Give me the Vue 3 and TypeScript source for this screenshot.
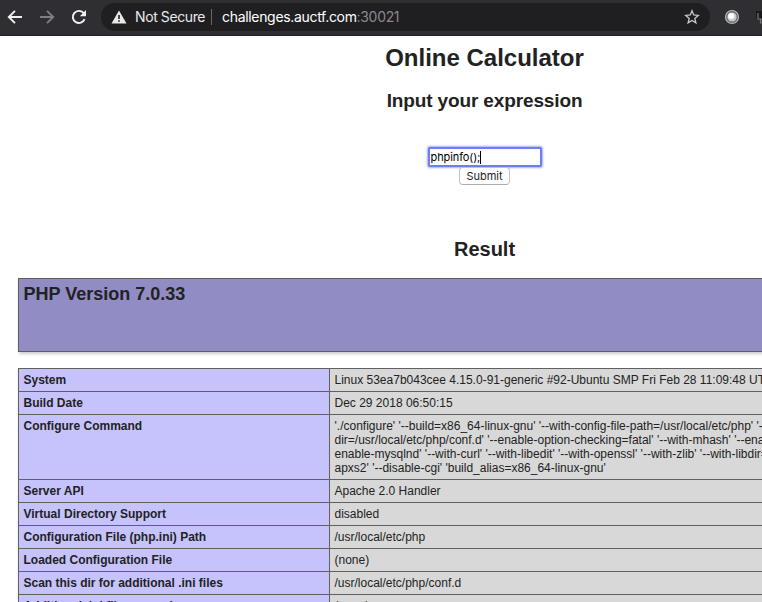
<script setup lang="ts">
interface InfoRow {
  name: string
  lines: string[]
}

const rows: InfoRow[] = [
  { name: 'System', lines: ['Linux 53ea7b043cee 4.15.0-91-generic #92-Ubuntu SMP Fri Feb 28 11:09:48 UTC'] },
  { name: 'Build Date', lines: ['Dec 29 2018 06:50:15'] },
  {
    name: 'Configure Command',
    lines: [
      "'./configure' '--build=x86_64-linux-gnu' '--with-config-file-path=/usr/local/etc/php' '--",
      "dir=/usr/local/etc/php/conf.d' '--enable-option-checking=fatal' '--with-mhash' '--enab",
      "enable-mysqlnd' '--with-curl' '--with-libedit' '--with-openssl' '--with-zlib' '--with-libdir=",
      "apxs2' '--disable-cgi' 'build_alias=x86_64-linux-gnu'",
    ],
  },
  { name: 'Server API', lines: ['Apache 2.0 Handler'] },
  { name: 'Virtual Directory Support', lines: ['disabled'] },
  { name: 'Configuration File (php.ini) Path', lines: ['/usr/local/etc/php'] },
  { name: 'Loaded Configuration File', lines: ['(none)'] },
  { name: 'Scan this dir for additional .ini files', lines: ['/usr/local/etc/php/conf.d'] },
  { name: 'Additional .ini files parsed', lines: ['(none)'] },
]
</script>

<template>
  <div class="window">
    <header class="toolbar">
      <svg class="nav-icon" viewBox="0 0 16 16"><path d="M15 8H2M8 1.8 1.8 8 8 14.2" /></svg>
      <svg class="nav-icon forward" viewBox="0 0 16 16"><path d="M1 8h13M8 1.8 14.2 8 8 14.2" /></svg>
      <svg class="nav-icon reload" viewBox="0 0 16 16">
        <path d="M13.6 10.2A6.1 6.1 0 1 1 12.5 3.9L14 5.4" />
        <path class="solid" d="M15 1v6.2H8.8z" />
      </svg>
      <div class="omnibox">
        <svg class="warning" viewBox="0 0 16 14">
          <path fill="#e9e9ea" d="M8 .5 15.5 13.5H.5z" />
          <path fill="#1f1f22" d="M7.2 5h1.6v4H7.2zM7.2 10.2h1.6v1.6H7.2z" />
        </svg>
        <span class="security">Not Secure</span>
        <span class="divider"></span>
        <span class="url"><span class="host">challenges.auctf.com</span><span class="port">:30021</span></span>
        <svg class="star" viewBox="0 0 16 16">
          <path d="M8 1.8 9.7 6l4.6.4-3.5 3 1.1 4.4L8 11.4l-3.9 2.4 1.1-4.4-3.5-3L6.3 6z" />
        </svg>
      </div>
      <svg class="orb" viewBox="0 0 16 16">
        <circle cx="8" cy="8" r="6.5" fill="#66696b" stroke="#b4b7b8" stroke-width="1.2" />
        <circle cx="8" cy="8" r="4.6" fill="#c8cccd" />
        <circle cx="7.2" cy="7" r="3" fill="#fff" />
      </svg>
      <svg class="clipped" viewBox="0 0 12 16">
        <path fill="#19191b" d="M0 2h9v8H0z" />
        <path fill="none" stroke="#77787a" stroke-width="1.2" d="M2 4v6h8M4.5 10v4h7" />
      </svg>
    </header>

    <main class="page">
      <h1>Online Calculator</h1>
      <h2 class="prompt">Input your expression</h2>
      <form class="calc" @submit.prevent>
        <div class="field"><span class="typed">phpinfo();</span><span class="caret"></span></div>
        <button type="submit">Submit</button>
      </form>
      <h2 class="result">Result</h2>

      <section class="banner"><span>PHP Version 7.0.33</span></section>

      <section class="info">
        <div v-for="row in rows" :key="row.name" class="row">
          <div class="name"><span>{{ row.name }}</span></div>
          <div class="value">
            <div v-for="line in row.lines" :key="line">{{ line }}</div>
          </div>
        </div>
      </section>
    </main>
  </div>
</template>

<style>
body {
  margin: 0;
  overflow: hidden;
}
</style>

<style scoped>
.window {
  width: 762px;
  height: 602px;
  overflow: hidden;
  background: #fff;
  color: #222;
  font-family: "Liberation Sans", Arial, sans-serif;
}
.toolbar {
  box-sizing: border-box;
  display: flex;
  align-items: center;
  width: 762px;
  height: 36px;
  padding: 0 0 2px 7px;
  background: #2f2e33;
  border-bottom: 1px solid #222125;
  overflow: hidden;
}
.nav-icon {
  flex: none;
  width: 16px;
  height: 16px;
  margin-right: 16px;
  fill: none;
  stroke: #f1f1f2;
  stroke-width: 1.9;
}
.nav-icon.forward {
  stroke: #7f7e82;
}
.nav-icon.reload {
  margin-right: 14px;
}
.nav-icon .solid {
  fill: #f1f1f2;
  stroke: none;
}
.omnibox {
  box-sizing: border-box;
  flex: none;
  display: flex;
  align-items: center;
  width: 609px;
  height: 28px;
  padding: 0 10px;
  border-radius: 14px;
  background: #1f1f22;
  font-family: Inter, sans-serif;
  font-size: 14px;
  line-height: 20px;
  white-space: nowrap;
}
.warning {
  width: 16px;
  height: 14px;
}
.security {
  width: 76px;
  margin-left: 8px;
  color: #e9e9ea;
  letter-spacing: -0.4px;
}
.divider {
  width: 1px;
  height: 16px;
  background: #68686b;
}
.url {
  margin-left: 10px;
  letter-spacing: -0.32px;
}
.host {
  color: #fff;
}
.port {
  color: #89898c;
}
.star {
  width: 16px;
  height: 16px;
  margin-left: auto;
  fill: none;
  stroke: #c7c7c9;
  stroke-width: 1.3;
}
.orb {
  flex: none;
  width: 16px;
  height: 16px;
  margin-left: 14px;
}
.clipped {
  flex: none;
  width: 12px;
  height: 16px;
  margin-left: 16px;
}
.page {
  display: flex;
  flex-direction: column;
  width: 933px;
  padding-left: 18px;
}
h1,
h2 {
  margin: 0;
  text-align: center;
  font-weight: bold;
}
h1 {
  margin-top: 8px;
  font-size: 24px;
  line-height: 28px;
}
h2 {
  font-size: 20px;
  line-height: 24px;
}
.prompt {
  margin-top: 17px;
  font-size: 19px;
  letter-spacing: -0.13px;
}
.calc {
  display: flex;
  flex-direction: column;
  align-items: center;
  margin-top: 34px;
}
.field {
  box-sizing: border-box;
  display: flex;
  align-items: center;
  width: 114px;
  height: 20px;
  padding: 1px 0 0 1px;
  border: 2px solid #6c7ef0;
  border-radius: 2px;
  box-shadow: 0 0 2px 1px #a3aff7;
  background: #fff;
  color: #000;
  font-family: Inter, sans-serif;
  font-size: 11px;
  line-height: 15px;
  letter-spacing: -0.1px;
}
.caret {
  width: 1px;
  height: 13px;
  background: #000;
}
button {
  position: relative;
  box-sizing: border-box;
  width: 51px;
  height: 18px;
  padding: 0;
  border: 1px solid #c3c3c3;
  border-bottom-color: #adadad;
  border-radius: 4px;
  background: #fff;
  color: #222;
  font-family: Inter, sans-serif;
  font-size: 11px;
  line-height: 15px;
}
.result {
  margin-top: 52px;
}
.banner {
  box-sizing: border-box;
  height: 74px;
  margin-top: 17px;
  padding: 5px 4.5px;
  border: 1px solid #5c5c5c;
  background: #918cc3;
  box-shadow: 1px 2px 3px #ccc;
  font-size: 18px;
  font-weight: bold;
  line-height: 21px;
}
.info {
  margin-top: 16px;
  border: 1px solid #606060;
  box-shadow: 1px 2px 3px #ccc;
  font-size: 12px;
  line-height: 14px;
}
.row {
  display: flex;
  border-bottom: 1px solid #606060;
}
.name {
  box-sizing: border-box;
  flex: none;
  width: 311px;
  padding: 4px 4px 4px 4.5px;
  border-right: 1px solid #606060;
  background: #c6c3fc;
  font-weight: bold;
}
.value {
  flex: 1;
  padding: 4px 4px 4px 4.5px;
  background: #d8d8d8;
  white-space: nowrap;
}
</style>
